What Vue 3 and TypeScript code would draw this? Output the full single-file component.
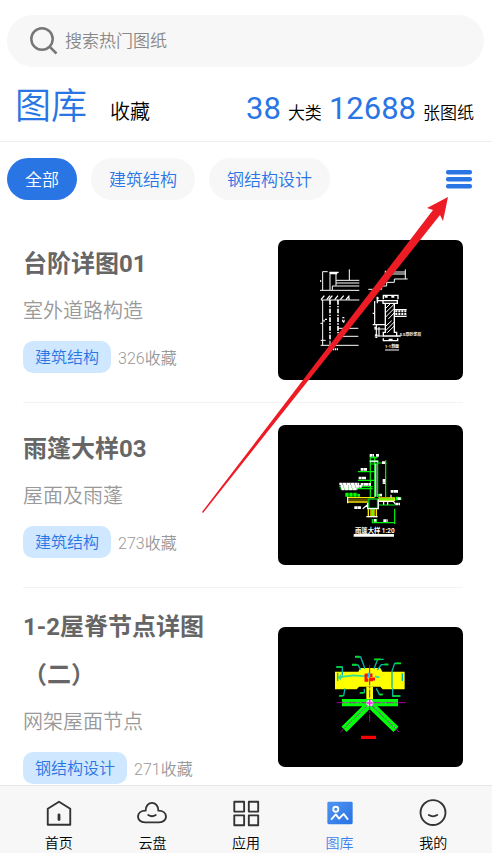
<script setup lang="ts">
import { ref } from 'vue'

interface Drawing {
  title: string
  subtitle: string
  category: string
  favorites: number
  art: 'steps' | 'canopy' | 'ridge'
}

const categories: string[] = ['全部', '建筑结构', '钢结构设计']
const activeCategory = ref<string>('全部')
const keyword = ref<string>('')

const drawings: Drawing[] = [
  { title: '台阶详图01', subtitle: '室外道路构造', category: '建筑结构', favorites: 326, art: 'steps' },
  { title: '雨篷大样03', subtitle: '屋面及雨蓬', category: '建筑结构', favorites: 273, art: 'canopy' },
  { title: '1-2屋脊节点详图（二）', subtitle: '网架屋面节点', category: '钢结构设计', favorites: 271, art: 'ridge' },
]

const tabs = [
  { id: 'home', label: '首页' },
  { id: 'cloud', label: '云盘' },
  { id: 'apps', label: '应用' },
  { id: 'gallery', label: '图库' },
  { id: 'me', label: '我的' },
]
const activeTab = ref<string>('gallery')
</script>

<template>
  <div class="page">
    <label class="search">
      <svg class="search-icon" viewBox="0 0 28 28" aria-hidden="true">
        <circle cx="12" cy="12" r="10.7" />
        <path d="M19.8 19.8 L26.5 26.5" />
      </svg>
      <input v-model="keyword" type="search" placeholder="搜索热门图纸" aria-label="搜索热门图纸" />
    </label>

    <header class="header">
      <nav class="views">
        <a class="view current" href="#gallery">图库</a>
        <a class="view" href="#favorites">收藏</a>
      </nav>
      <p class="stats"><b>38</b><span>大类</span><b>12688</b><span>张图纸</span></p>
    </header>

    <div class="filters">
      <button
        v-for="name in categories"
        :key="name"
        type="button"
        class="chip"
        :class="{ active: name === activeCategory }"
        @click="activeCategory = name"
      >{{ name }}</button>
      <button type="button" class="menu" aria-label="全部分类">
        <svg viewBox="0 -1 26 20" aria-hidden="true">
          <rect width="26" height="4.6" rx="2" />
          <rect y="7" width="26" height="4.6" rx="2" />
          <rect y="14" width="26" height="4.6" rx="2" />
        </svg>
      </button>
    </div>

    <main class="list">
      <article v-for="item in drawings" :key="item.title" class="item">
        <div class="info">
          <h2>{{ item.title }}</h2>
          <p class="subtitle">{{ item.subtitle }}</p>
          <div class="meta">
            <span class="tag">{{ item.category }}</span>
            <span class="count">{{ item.favorites }}收藏</span>
          </div>
        </div>

        <svg v-if="item.art === 'steps'" class="thumb" viewBox="0 0 185 140" aria-hidden="true">
          <g transform="translate(32 20) scale(.3333)" fill="none" stroke="#fff" stroke-width="3">
            <path d="M38 35H53M38 35V90M30 91H148M60 38V90M78 40V77M67 90V78H148M78 61H148M78 69H148M118 28V61M32 60V66" />
            <path d="M58 37H86M60 41H82" stroke-width="4" />
            <path d="M33 120H148M38 120V256M32 241H47M32 256H146M60 244V254H76M84 205H145M84 229H145M31 190H38" />
            <path d="M60 120V244M84 120V240" stroke-width="5" stroke-dasharray="14 4 4 4" />
            <path d="M33 119L43 107M50 119L60 107M57 119L67 107M74 119L84 107M91 119L101 107M108 119L118 107M117 112V119" stroke-width="4" />
            <path d="M40 182h4M48 176v6M96 182h8M100 171v6M99 185h4M68 268h18" stroke-width="6" stroke-dasharray="4 2" />
            <path d="M175 88H215V78H230V67H253V57H293M286 28V57M226 36H286M226 42H286M226 32V50" />
            <path d="M220 118V106H264V118M219 122H262V130H219ZM226 130V217H220V228H260V217H253V130" stroke-width="4" />
            <path d="M227 145L242 130M227 158L253 132M227 171L253 145M235 177L253 158M227 199L245 182M227 212L253 186M232 218L253 198" />
            <path d="M194 123V194M188 194H226M188 160H194M199 195V230M207 201V230M194 207H226M194 228H220M202 110V130M202 122H219" stroke-width="3.6" />
            <path d="M224 110h9M244 110h9" stroke-width="7" />
            <path d="M254 149H290M254 169H290M260 228H272M220 235V242H263V235M236 238h12" stroke-width="4" />
            <path d="M256 154H289M256 162H289M203 112v12M196 200v10M199 222v12" stroke-width="6" stroke-dasharray="6 3" />
            <path d="M225 270H267" />
            <text x="269" y="229" class="cad-label">5.5厚砂浆层</text>
            <text x="225" y="264" class="cad-label">1-1剖面</text>
          </g>
        </svg>

        <svg v-else-if="item.art === 'canopy'" class="thumb" viewBox="0 0 185 140" aria-hidden="true">
          <g transform="translate(47 20) scale(.3333)" fill="none" stroke-width="3.6">
            <path d="M136 34V156M149 34V156M158 48V156M134 48H160M134 57H160M136 38H158M159 54H185M182 46V156M99 80H149M99 106H149M43 125H143M46 131H143M142 222V235M154 222V235M142 233H209M209 191V237M160 180H211" stroke="#00f20c" />
            <path d="M152 56V155M134 49H160" stroke="#caffdf" stroke-width="5" />
            <path d="M61 147H98M61 151H105M156 151H170M217 155V168M213 161H229" stroke="#00ff00" stroke-width="8" stroke-dasharray="10 2" />
            <path d="M68 158H149M68 171H130M160 159H209M160 167H209M209 157V168M130 192V217M138 192V217M147 192V217M154 192V217" stroke="#ffe600" stroke-width="4" />
            <path d="M70 165H130" stroke="#756d00" stroke-width="5" />
            <path d="M160 163H208M143 193V215" stroke="#77f800" stroke-width="7" />
            <path d="M131 162H158V190H131Z" stroke="#00b91d" stroke-width="5" />
            <path d="M128 174V191H160V163M68 155V175M124 215H158M113 191L128 179M160 169H205L210 176M176 171V179M188 171V179M198 149V158" stroke="#fff" />
            <path d="M134 31H147M153 31H162M107 73H126M101 99H123M43 117H103M107 118H138M47 124H110M49 132H97M88 188H108M197 139H219M163 150H171M211 177H225M177 102V117M171 53H180M175 227H188M146 226H154M218 161H227" stroke="#fff" stroke-width="8" stroke-dasharray="9 1 12 1" />
            <text x="90" y="265" class="cad-title">雨篷大样 1:20</text>
            <path d="M86 271H207" stroke="#fff" stroke-width="8" />
          </g>
        </svg>

        <svg v-else class="thumb" viewBox="0 0 185 140" aria-hidden="true">
          <g transform="translate(42 13) scale(.3333)" fill="none">
            <path d="M139 140H159V195H139Z" fill="#ff0" />
            <path d="M45 95H115L121 84H181L187 95H254V148H188L181 140H117L110 148H45Z" fill="#ff0" />
            <path d="M66 188H234M149 192L72 268M149 192L228 268" stroke="#00ff08" stroke-width="22" />
            <path d="M50 188H257M149 75V245M149 190L62 276M149 190L237 276" stroke="#a300a8" stroke-width="3" stroke-dasharray="24 4 5 4" />
            <path d="M66 188H234M149 190L75 264M149 190L226 264" stroke="#70926a" stroke-width="2" stroke-dasharray="24 4 5 4" />
            <path d="M49 81H67V107M96 75H114L122 89M105 51H122L135 86M191 58H173L162 86M205 74H184L172 90M242 70H224L216 93V143M75 145L71 167H59M133 146V158H121M169 145L178 163H189M218 145V168H242M53 98V123M247 100V123" stroke="#00b8a6" stroke-width="4" />
            <path d="M49 81H65M96 74H110M105 50H119M162 58H182M193 73H205M226 70H243M57 168H68M119 159H130M178 164H188M218 168H240" stroke="#00df22" stroke-width="5" />
            <path d="M54 112L100 106L141 109M165 109L178 112M56 112l5-4v8z" stroke="#35dc91" stroke-width="5" />
            <path d="M138 101V121H145M150 117H165M154 115V124M137 105H153V111" stroke="#f10" stroke-width="9" />
            <path d="M147 98V113" stroke="#19bfff" stroke-width="7" />
            <circle cx="149" cy="189" r="10" fill="#fcf" />
            <path d="M141 189H158M149 178V199" stroke="#ff18ed" stroke-width="4" />
            <path d="M123 292H168" stroke="#f00" stroke-width="10" />
          </g>
        </svg>
      </article>
    </main>

    <nav class="tabbar">
      <a
        v-for="tab in tabs"
        :key="tab.id"
        class="tab"
        :class="{ active: tab.id === activeTab }"
        :href="'#' + tab.id"
        @click="activeTab = tab.id"
      >
        <svg class="tab-icon" viewBox="0 0 32 32" aria-hidden="true">
          <template v-if="tab.id === 'home'">
            <path d="M4 11.5L16 4L28 11.5V28.5H4Z" />
            <path d="M16 18V23" stroke-width="3" stroke-linecap="round" />
          </template>
          <template v-else-if="tab.id === 'cloud'">
            <path d="M8.5 26H23.5C33.5 26 33.5 13.5 22.8 13.5C22.8 2.5 9.2 2.5 9.2 13.5C-1.5 13.5-1.5 26 8.5 26Z" />
            <path d="M12 18.2Q16 20.8 20 18.2" stroke-linecap="round" />
          </template>
          <template v-else-if="tab.id === 'apps'">
            <path d="M3.5 4H14V14.5H3.5ZM19 4H29V14.5H19ZM3.5 18.5H14V29H3.5ZM19 18.5H29V29H19Z" />
          </template>
          <template v-else-if="tab.id === 'gallery'">
            <defs>
              <linearGradient id="gallery-fill" x2="1" y2="1">
                <stop stop-color="#5295f0" />
                <stop offset="1" stop-color="#2773e4" />
              </linearGradient>
            </defs>
            <rect x="2.5" y="4" width="27" height="24" rx="1.5" fill="url(#gallery-fill)" stroke="none" />
            <g stroke="#fff">
              <circle cx="11.5" cy="12" r="2.7" />
              <path d="M6.5 23L11.5 17.5L15 22L20 17L24.5 23" />
            </g>
          </template>
          <template v-else>
            <circle cx="16" cy="15.5" r="13.3" />
            <path d="M11.5 18.2Q16 21 20.5 18.2" stroke-linecap="round" />
          </template>
        </svg>
        <span>{{ tab.label }}</span>
      </a>
    </nav>

    <svg class="pointer" viewBox="0 0 246 316" aria-hidden="true">
      <path d="M0 315L231 13L225 11L246 0L241 24L238 18L1 316Z" />
    </svg>
  </div>
</template>

<style>
body {
  margin: 0;
}
</style>

<style scoped>
.page {
  position: relative;
  display: flex;
  flex-direction: column;
  box-sizing: border-box;
  height: 100vh;
  padding-top: 15px;
  overflow: hidden;
  background: #fff;
  color: #000;
  font-family: Roboto, "Noto Sans CJK SC", sans-serif;
  font-weight: 350;
}

.search {
  display: flex;
  flex: none;
  align-items: center;
  gap: 7px;
  height: 52px;
  margin: 0 8px 0 7px;
  padding: 0 23px;
  box-sizing: border-box;
  border-radius: 26px;
  background: #f7f7f7;
}

.search-icon {
  width: 28px;
  height: 28px;
  fill: none;
  stroke: #777;
  stroke-width: 2.5;
}

.search input {
  flex: 1;
  min-width: 0;
  padding: 0;
  border: 0;
  outline: 0;
  background: transparent;
  font: 350 17px/24px Roboto, "Noto Sans CJK SC", sans-serif;
}

.search input::placeholder {
  color: #888;
  opacity: 1;
}

.header {
  display: flex;
  flex: none;
  align-items: baseline;
  justify-content: space-between;
  height: 74px;
  padding: 0 18px 0 15px;
  border-bottom: 1px solid #eee;
}

.views {
  display: flex;
  align-items: baseline;
  gap: 23px;
}

.view {
  color: #000;
  font-size: 20px;
  text-decoration: none;
}

.view.current {
  color: #2a75e4;
  font-size: 36px;
  line-height: 80px;
}

.stats {
  display: flex;
  align-items: baseline;
  gap: 7px;
  margin: 0;
  font-size: 17px;
  white-space: nowrap;
}

.stats b {
  color: #2a75e4;
  font-size: 31px;
  font-weight: 400;
}

.filters {
  display: flex;
  flex: none;
  align-items: center;
  gap: 14px;
  padding: 16px 20px 18px 7px;
}

.chip {
  height: 42px;
  padding: 2px 18px 0;
  border: 0;
  border-radius: 21px;
  background: #f7f7f7;
  color: #2a75e4;
  font: 350 17px/24px Roboto, "Noto Sans CJK SC", sans-serif;
  white-space: nowrap;
}

.chip.active {
  background: #2a75e4;
  color: #fff;
}

.menu {
  display: flex;
  margin-left: auto;
  padding: 0;
  border: 0;
  background: none;
}

.menu svg {
  width: 26px;
  height: 20px;
  fill: #2a75e4;
}

.list {
  flex: 1;
  min-height: 0;
  overflow: hidden;
  padding: 0 29px 0 23px;
}

.item {
  display: flex;
  align-items: center;
  gap: 24px;
  padding: 15px 0;
  border-bottom: 1px solid #f3f3f3;
}

.info {
  flex: 1;
  min-width: 0;
}

h2 {
  margin: 0;
  color: #666;
  font-size: 24px;
  font-weight: 700;
  line-height: 48px;
}

.subtitle {
  margin: 0;
  color: #999;
  font-size: 20px;
  line-height: 46px;
}

.meta {
  display: flex;
  align-items: center;
  gap: 7px;
  height: 46px;
}

.tag {
  padding: 1px 12px 0;
  border-radius: 10px;
  background: #cfe8ff;
  color: #2a75e4;
  font-size: 16px;
  line-height: 31px;
}

.count {
  color: #999;
  font-size: 16px;
}

.thumb {
  flex: none;
  width: 185px;
  height: 140px;
  margin: 7px 0;
  border-radius: 7px;
  background: #000;
}

.cad-label {
  fill: #fff;
  stroke: none;
  font-size: 12px;
  font-weight: 700;
}

.cad-title {
  fill: #fff;
  stroke: none;
  font-size: 19px;
  font-weight: 700;
}

.tabbar {
  display: flex;
  flex: none;
  height: 67px;
  padding: 0 12px;
  border-top: 1px solid #e6e6e6;
  background: #f7f7f7;
}

.tab {
  display: flex;
  flex: 1;
  flex-direction: column;
  align-items: center;
  gap: 5px;
  padding-top: 12px;
  color: #000;
  font-size: 14px;
  line-height: 20px;
  text-decoration: none;
}

.tab.active {
  color: #3d83ee;
}

.tab-icon {
  width: 32px;
  height: 32px;
  fill: none;
  stroke: #333;
  stroke-width: 2;
  stroke-linejoin: round;
}

.pointer {
  position: absolute;
  top: 197px;
  right: 44px;
  width: 246px;
  height: 316px;
  fill: #ed1c24;
  pointer-events: none;
}
</style>
